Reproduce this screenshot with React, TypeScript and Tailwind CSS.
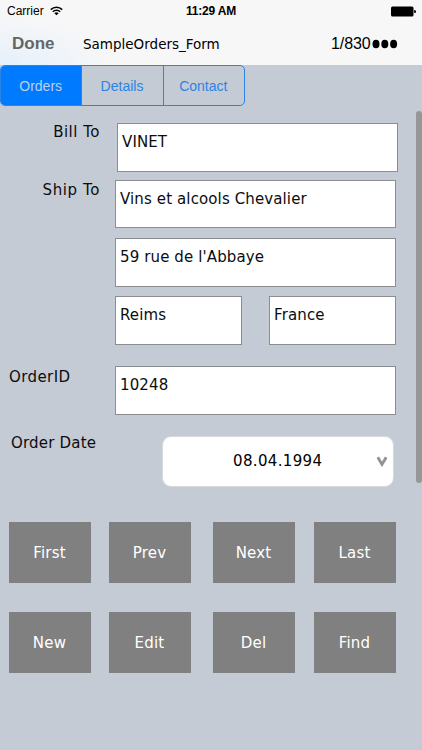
import { useState, type ReactNode } from "react";
import clsx from "clsx";

const TABS = ["Orders", "Details", "Contact"];

export default function App() {
  const [tab, setTab] = useState("Orders");

  return (
    <div className="flex h-[750px] w-[422px] flex-col overflow-hidden bg-[#c5cbd4] font-['DejaVu_Sans',sans-serif] text-[15px] text-[#0c0d0f]">
      <header className="h-[65px] shrink-0 bg-[#f7f7f8] bg-[radial-gradient(110px_50px_at_0%_100%,#e5f0fb_0%,#f7f7f8_100%)]">
        <StatusBar />

        {/* Navigation bar */}
        <div className="flex h-[43px] items-center whitespace-nowrap text-black">
          <button className="ml-[12px] w-[71px] text-left font-['Liberation_Sans',sans-serif] text-[17px] font-bold leading-[20px] text-[#646567]">
            Done
          </button>
          <span className="w-[248px] text-[13.5px] leading-[20px]">SampleOrders_Form</span>
          <span className="w-[40px] font-['Liberation_Sans',sans-serif] text-[16px] leading-[20px] tracking-[-0.1px]">1/830</span>
          <svg width="27" height="12" viewBox="0 0 27 12">
            <ellipse cx="5" cy="6" rx="3.5" ry="4.3" />
            <ellipse cx="13.8" cy="6" rx="3.5" ry="4.3" />
            <ellipse cx="22.6" cy="6" rx="3.5" ry="4.3" />
          </svg>
        </div>
      </header>

      <main className="flex flex-1">
        <div className="w-[416px]">
          {/* Segmented tabs */}
          <div className="flex h-[41px] w-[245px] overflow-hidden rounded-[5px] border border-[#2b83e6] font-['Liberation_Sans',sans-serif] text-[14px]">
            {TABS.map((name) => (
              <button
                key={name}
                onClick={() => setTab(name)}
                className={clsx(
                  "flex-1 border-r border-[#2b83e6] pr-px pt-[2px] last:border-r-0",
                  tab === name ? "bg-[#007aff] text-[#b9d0ee]" : "text-[#2b83e6]"
                )}
              >
                {name}
              </button>
            ))}
          </div>

          <div className="mt-[17px] flex h-[49px]">
            <Label className="w-[100px] text-right tracking-[0.5px]">Bill To</Label>
            <Field className="ml-[17px] w-[281px]">VINET</Field>
          </div>
          <div className="mt-[8px] flex h-[48px]">
            <Label className="w-[100px] pt-[1px] text-right tracking-[0.6px]">Ship To</Label>
            <Field className="ml-[15px] w-[281px]">Vins et alcools Chevalier</Field>
          </div>
          <div className="ml-[115px] mt-[10px] flex h-[49px]">
            <Field className="w-[281px]">59 rue de l'Abbaye</Field>
          </div>
          <div className="ml-[115px] mt-[9px] flex h-[49px] gap-[27px]">
            <Field className="w-[127px]">Reims</Field>
            <Field className="w-[127px]">France</Field>
          </div>
          <div className="mt-[21px] flex h-[49px]">
            <Label className="w-[115px] pl-[9px] pt-[2px] tracking-[0.4px]">OrderID</Label>
            <Field className="w-[281px]">10248</Field>
          </div>

          <div className="mt-[21px] flex h-[51px]">
            <Label className="-mt-[2px] w-[162px] pl-[11px] tracking-[0.2px]">Order Date</Label>
            <button className="flex w-[232px] items-center rounded-[9px] border border-[#d5d8dd] bg-white pl-[70px] text-black">
              <span className="w-[143px] pb-px text-left tracking-[0.35px]">08.04.1994</span>
              <svg width="12" height="11" viewBox="0 0 12 11" fill="none" stroke="#929292" strokeWidth="2.8">
                <path d="M1.8 1.2 6 8.4l4.2-7.2" />
              </svg>
            </button>
          </div>

          {/* Record buttons */}
          <div className="mt-[35px] flex flex-col gap-[29px] pl-[9px]">
            <div className="flex">
              <Action>First</Action>
              <Action className="ml-[18px]">Prev</Action>
              <Action className="ml-[22px]">Next</Action>
              <Action className="ml-[19px]">Last</Action>
            </div>
            <div className="flex">
              <Action>New</Action>
              <Action className="ml-[18px]">Edit</Action>
              <Action className="ml-[22px]">Del</Action>
              <Action className="ml-[19px]">Find</Action>
            </div>
          </div>
        </div>

        {/* Scroll thumb */}
        <div className="mt-[46px] h-[372px] w-[6px] rounded-[3px] bg-[#969696]" />
      </main>
    </div>
  );
}

function StatusBar() {
  return (
    <div className="flex h-[22px] items-center whitespace-nowrap font-['Liberation_Sans',sans-serif] text-[12px] leading-[14px] text-black">
      <span className="ml-[7px] w-[43px]">Carrier</span>
      <svg width="13" height="10" viewBox="0 0 13 10" fill="none" stroke="#000" strokeWidth="1.5">
        <path d="M.8 3.6a8.2 8.2 0 0 1 11.4 0M2.8 5.8a5.3 5.3 0 0 1 7.4 0" />
        <path d="M6.5 9.3 4.4 7.2a3 3 0 0 1 4.2 0z" fill="#000" stroke="none" />
      </svg>
      <span className="ml-[123px] w-[205px] font-bold tracking-[-0.2px]">11:29 AM</span>
      <svg width="26" height="11" viewBox="0 0 26 11">
        <rect x="0" y=".5" width="22.5" height="10" rx="1.5" />
        <path d="M23.2 4h.4a1.5 1.5 0 0 1 0 3h-.4z" />
      </svg>
    </div>
  );
}

interface BoxProps {
  className?: string;
  children: ReactNode;
}

function Label({ className, children }: BoxProps) {
  return <div className={clsx("shrink-0 whitespace-nowrap leading-[18px]", className)}>{children}</div>;
}

function Field({ className, children }: BoxProps) {
  return (
    <div className={clsx("border border-[#8b8d91] bg-white pl-[4px] pt-[9px] leading-[18px] tracking-[0.12px]", className)}>
      {children}
    </div>
  );
}

function Action({ className, children }: BoxProps) {
  return (
    <button className={clsx("h-[61px] w-[82px] bg-[#808080] pr-px pt-[2px] tracking-[0.2px] text-white", className)}>
      {children}
    </button>
  );
}
